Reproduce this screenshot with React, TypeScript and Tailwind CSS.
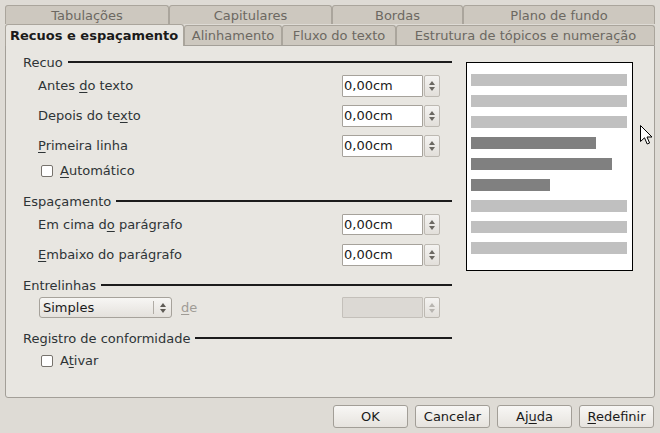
import React from "react";

const F = { fontFamily: '"DejaVu Sans", "Liberation Sans", sans-serif' };

function Header({ label }: { label: string }) {
  return (
    <div className="flex items-center h-[18px] text-[#2e3436]">
      <span className="leading-none">{label}</span>
      <div className="flex-1 h-[2px] bg-[#1c1c1c] ml-[5px]" />
    </div>
  );
}

function Spin({ disabled }: { disabled?: boolean }) {
  const c = disabled ? "#b8b5b0" : "#6b6862";
  return (
    <div className="w-[16px] h-full border border-[#bdb9b2] rounded-[2px] bg-gradient-to-b from-[#f4f3f1] to-[#e2dfda] flex flex-col items-center justify-center gap-[2px]">
      <svg width="6" height="4" viewBox="0 0 6 4"><path d="M3 0 L6 4 L0 4 Z" fill={c} /></svg>
      <svg width="6" height="4" viewBox="0 0 6 4"><path d="M0 0 L6 0 L3 4 Z" fill={c} /></svg>
    </div>
  );
}

function Field({ value, disabled }: { value?: string; disabled?: boolean }) {
  return (
    <div className="flex h-full gap-[1px]">
      <div
        className={`w-[81px] h-full border ${disabled ? "border-[#c4c0ba] bg-[#dcd9d4]" : "border-[#a6a29b] bg-white"} rounded-[1px] flex items-center pl-[1px] text-[#1a1a1a]`}
      >
        {value}
      </div>
      <Spin disabled={disabled} />
    </div>
  );
}

function Row({ children, value, h = "h-[22px]" }: { children: React.ReactNode; value: string; h?: string }) {
  return (
    <div className={`flex items-center ${h}`}>
      <div className="pl-[15px] w-[319px] text-[#2e3436]">{children}</div>
      <Field value={value} />
    </div>
  );
}

function Check({ children }: { children: React.ReactNode }) {
  return (
    <div className="flex items-center h-[18px] pl-[18px] text-[#2e3436]">
      <div className="w-[12px] h-[12px] border border-[#77736d] rounded-[2px] bg-white" />
      <span className="ml-[7px]">{children}</span>
    </div>
  );
}

function Tab({ w, label, h = "h-[20px]" }: { w: string; label: string; h?: string }) {
  return (
    <div
      className={`${w} ${h} flex items-center justify-center border border-b-0 border-[#aaa59c] rounded-t-[3px] bg-[#cdc8bf] text-[#6c6862] leading-none`}
    >
      {label}
    </div>
  );
}

const U = ({ c }: { c: string }) => <span className="underline underline-offset-2">{c}</span>;

export default function App() {
  const bars: [string, number][] = [
    ["#c0c0c0", 156],
    ["#c0c0c0", 156],
    ["#c0c0c0", 156],
    ["#808080", 125],
    ["#808080", 141],
    ["#808080", 79],
    ["#c0c0c0", 156],
    ["#c0c0c0", 156],
    ["#c0c0c0", 156],
  ];
  return (
    <div className="w-[660px] h-[433px] bg-[#dedbd5] relative overflow-hidden text-[13px]" style={F}>
      <div className="pl-[5px] pt-[5px]">
        <div className="flex h-[19px]">
          <Tab w="w-[164px]" label="Tabulações" h="h-[19px]" />
          <Tab w="w-[163px]" label="Capitulares" h="h-[19px]" />
          <Tab w="w-[131px]" label="Bordas" h="h-[19px]" />
          <Tab w="w-[192px]" label="Plano de fundo" h="h-[19px]" />
        </div>
        <div className="flex items-end h-[21px] relative z-10">
          <div className="w-[179px] h-[22px] mb-[-1px] flex items-center pl-[4px] border border-b-0 border-[#aaa59c] rounded-t-[3px] bg-[#e8e6e1] font-bold text-[#1a1a1a] leading-none">
            Recuos e espaçamento
          </div>
          <Tab w="w-[98px]" label="Alinhamento" />
          <Tab w="w-[114px]" label="Fluxo do texto" />
          <Tab w="w-[259px]" label="Estrutura de tópicos e numeração" />
        </div>
        <div className="w-[650px] h-[353px] border border-[#a39f98] rounded-b-[3px] bg-[#e8e6e1] flex pl-[17px] pt-[7px]">
          <div className="w-[429px] flex flex-col">
            <Header label="Recuo" />
            <div className="mt-[4px]" />
            <Row value="0,00cm">
              Antes <U c="d" />o texto
            </Row>
            <div className="mt-[8px]" />
            <Row value="0,00cm">
              Depois do te<U c="x" />to
            </Row>
            <div className="mt-[8px]" />
            <Row value="0,00cm">
              <U c="P" />rimeira linha
            </Row>
            <div className="mt-[5px]" />
            <Check>
              <U c="A" />utomático
            </Check>
            <div className="mt-[12px]" />
            <Header label="Espaçamento" />
            <div className="mt-[4px]" />
            <Row value="0,00cm" h="h-[21px]">
              Em cima d<U c="o" /> parágrafo
            </Row>
            <div className="mt-[9px]" />
            <Row value="0,00cm">
              <U c="E" />mbaixo do parágrafo
            </Row>
            <div className="mt-[10px]" />
            <Header label="Entrelinhas" />
            <div className="mt-[3px]" />
            <div className="flex items-center h-[21px]">
              <div className="ml-[16px] w-[133px] h-full border border-[#a6a29b] rounded-[3px] bg-gradient-to-b from-[#f7f6f4] to-[#e4e1dc] flex items-center">
                <span className="pl-[3px] flex-1 text-[#1a1a1a]">Simples</span>
                <div className="w-[1px] h-[13px] bg-[#b0aca5]" />
                <div className="w-[17px] flex flex-col items-center justify-center gap-[2px]">
                  <svg width="6" height="4" viewBox="0 0 6 4"><path d="M3 0 L6 4 L0 4 Z" fill="#5e5b55" /></svg>
                  <svg width="6" height="4" viewBox="0 0 6 4"><path d="M0 0 L6 0 L3 4 Z" fill="#5e5b55" /></svg>
                </div>
              </div>
              <span className="ml-[9px] text-[#a09c96] w-[161px]">
                <U c="d" />e
              </span>
              <Field disabled />
            </div>
            <div className="mt-[11px]" />
            <Header label="Registro de conformidade" />
            <div className="mt-[5px]" />
            <Check>
              A<U c="t" />ivar
            </Check>
          </div>
          <div className="ml-[14px] mt-[9px] w-[167px] h-[209px] border-[1.5px] border-black bg-white flex flex-col gap-[9px] pt-[11px] pl-[4px]">
            {bars.map(([c, w], i) => (
              <div key={i} className="h-[12px] shrink-0" style={{ background: c, width: w }} />
            ))}
          </div>
        </div>
      </div>
      <div className="flex justify-end gap-[7px] pr-[6px] mt-[7px]">
        {[
          ["OK", null],
          ["Cancelar", null],
          ["Aj", "u", "da"],
          ["", "R", "edefinir"],
        ].map((b, i) => (
          <div
            key={i}
            className="w-[75px] h-[23px] border border-[#a29e97] rounded-[3px] bg-gradient-to-b from-[#f8f7f5] to-[#e6e3de] flex items-center justify-center text-[#1a1a1a]"
          >
            {b[1] === null ? b[0] : (
              <span>
                {b[0]}
                <U c={b[1] as string} />
                {b[2]}
              </span>
            )}
          </div>
        ))}
      </div>
      <svg className="absolute left-[640px] top-[125px]" width="13" height="21" viewBox="0 0 13 21">
        <path d="M0.5 0.5 L0.5 16.5 L4.5 12.8 L7.2 19 L9.6 18 L7 12 L12 12 Z" fill="white" stroke="black" strokeWidth="1" strokeLinejoin="round" />
      </svg>
    </div>
  );
}
